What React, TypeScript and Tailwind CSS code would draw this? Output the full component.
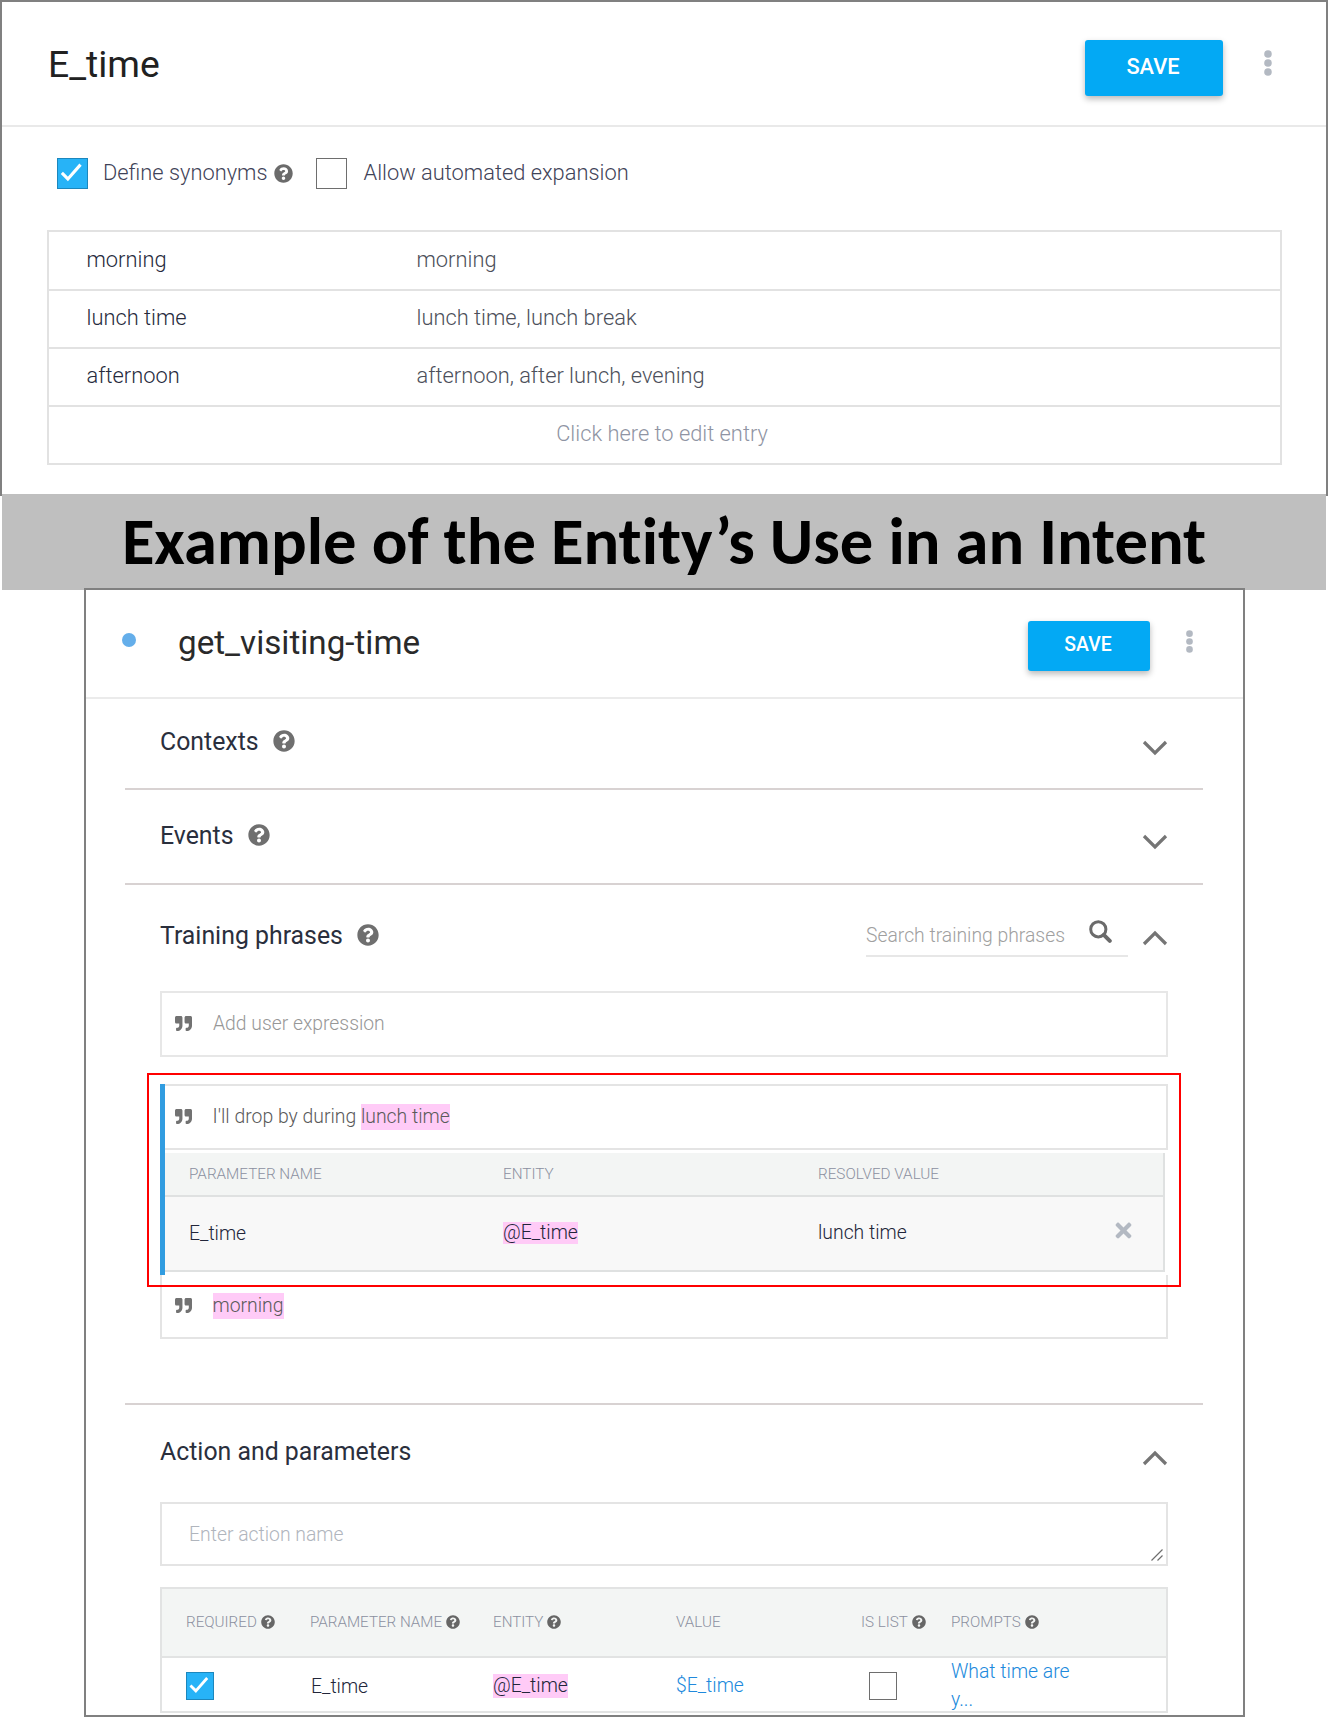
import type { ReactNode } from "react";
import { FaQuestionCircle, FaQuoteRight, FaTimes } from "react-icons/fa";

function Check({ on, className }: { on?: boolean; className: string }) {
  return (
    <span
      className={`flex shrink-0 items-center justify-center border-[1px] ${
        on ? "border-[#1c87bd] bg-[#27b3f7]" : "border-[#6e6e6e] bg-white"
      } ${className}`}
    >
      {on && (
        <svg viewBox="0 0 30 30" className="h-full w-full" fill="none" stroke="#fff" strokeWidth="3.2">
          <path d="M4 14.4 L10.2 20.6 L23.3 5.8" />
        </svg>
      )}
    </span>
  );
}

function Dots({ className }: { className: string }) {
  return (
    <svg viewBox="0 0 8 26" className={className} fill="#b3b9c2">
      <circle cx="4" cy="4" r="3.8" />
      <circle cx="4" cy="13" r="3.8" />
      <circle cx="4" cy="22" r="3.8" />
    </svg>
  );
}

function Chevron({ up, className = "" }: { up?: boolean; className?: string }) {
  return (
    <svg viewBox="0 0 26 16" className={`h-4 w-[26px] shrink-0 ${className}`} fill="none" stroke="#757575" strokeWidth="3.2">
      <path d={up ? "M2 14 L13 3 L24 14" : "M2 2 L13 13 L24 2"} />
    </svg>
  );
}

function Mark({ children, className = "h-[26px]" }: { children: ReactNode; className?: string }) {
  return <span className={`inline-flex items-center bg-[#ffcbf7] ${className}`}>{children}</span>;
}

function Quote() {
  return <FaQuoteRight className="mb-[2px] h-[17px] w-[19px] shrink-0 text-[#727272]" />;
}

function Th({ children, help }: { children: ReactNode; help?: boolean }) {
  return (
    <div className="flex items-center gap-1 whitespace-nowrap">
      {children}
      {help && <FaQuestionCircle className="h-3.5 w-3.5 text-[#666]" />}
    </div>
  );
}

const entries = [
  { name: "morning", synonyms: "morning", row: "h-[59px] pb-0" },
  { name: "lunch time", synonyms: "lunch time, lunch break", row: "h-[58px] pb-[2px]" },
  { name: "afternoon", synonyms: "afternoon, after lunch, evening", row: "h-[58px] pb-[2px]" },
];

function EntityPanel() {
  return (
    <section className="h-[496px] border-x-2 border-t-2 border-[#808080] bg-white">
      <header className="flex h-[125px] items-center border-b-2 border-[#e9e9e9] pl-[46px] pr-[54px]">
        <h1 className="mt-[2px] flex-1 text-[37.3px] leading-none text-[#212121]">E_time</h1>
        <button className="mr-[41px] mt-[8px] flex h-14 w-[138px] items-center justify-center rounded-[3px] bg-[#03a9f4] pb-[1px] pr-[2px] text-[21.8px] font-medium text-white shadow-[0_3px_6px_rgba(0,0,0,0.28)]">
          SAVE
        </button>
        <Dots className="mb-[1px] h-[26px] w-2" />
      </header>
      <div className="flex h-[92px] items-center pl-[55px] text-[21.85px] font-light text-[#3f4358]">
        <Check on className="mt-[1px] h-[31px] w-[31px]" />
        <span className="ml-[15px]">Define synonyms</span>
        <FaQuestionCircle className="ml-[6px] h-[19px] w-[19px] text-[#6b6b6b]" />
        <Check className="ml-[23px] mt-[1px] h-[31px] w-[31px]" />
        <span className="ml-[17px]">Allow automated expansion</span>
      </div>
      <div className="ml-[45px] mt-[11px] w-[1235px] border-2 border-b-0 border-[#e2e2e2] text-[21.85px] font-light">
        {entries.map((e) => (
          <div key={e.name} className={`grid grid-cols-[330px_1fr] items-center border-b-2 border-[#e2e2e2] pl-[37.5px] ${e.row}`}>
            <span className="text-[#262a3c]">{e.name}</span>
            <span className="text-[#4c4f5a]">{e.synonyms}</span>
          </div>
        ))}
        <div className="flex h-[58px] items-center justify-center border-b-2 border-[#e2e2e2] pb-[2px] pr-[5px] text-[#8f94a3]">
          Click here to edit entry
        </div>
      </div>
    </section>
  );
}

function PhraseTable() {
  return (
    <div className="mr-[3px] mt-[3px] border-r-2 border-[#dfe1e1] font-light">
      <div className="grid h-11 grid-cols-[314px_315px_1fr] items-center border-b-2 border-[#dfe1e1] bg-[#f3f5f4] pl-6 text-[15.25px] text-[#8b90a0]">
        <span>PARAMETER NAME</span>
        <span>ENTITY</span>
        <span>RESOLVED VALUE</span>
      </div>
      <div className="grid h-[75px] grid-cols-[314px_315px_1fr_auto] items-center border-b-2 border-[#dfe1e1] bg-[#f8f8f8] pl-6 pr-[28px] text-[19.36px] text-[#22263a]">
        <span className="mt-[1px]">E_time</span>
        <span className="mb-[1px] flex">
          <Mark className="h-[22px]">@E_time</Mark>
        </span>
        <span className="mb-[2px]">lunch time</span>
        <FaTimes className="mb-[7px] h-[23px] w-[23px] text-[#b3b9c2]" />
      </div>
    </div>
  );
}

function SectionHead({ title, help, className }: { title: string; help?: boolean; className: string }) {
  return (
    <div className={`flex items-center gap-[14px] text-[24.85px] text-[#2a2f3d] ${className}`}>
      <h3>{title}</h3>
      {help && <FaQuestionCircle className="h-[22px] w-[22px] text-[#6f6f6f]" />}
    </div>
  );
}

function IntentPanel() {
  return (
    <section className="relative -mt-[2px] ml-[84px] h-[1129px] w-[1161px] overflow-hidden border-2 border-[#808080] bg-white">
      <header className="flex h-[109px] items-center border-b-2 border-[#ebebeb] pl-9 pr-[50px]">
        <span className="mb-[8px] h-3.5 w-3.5 rounded-full bg-[#64aeea]" />
        <h2 className="mb-[2px] ml-[42px] flex-1 text-[33.2px] leading-none text-[#2a2a2a]">get_visiting-time</h2>
        <button className="mb-[-4px] mr-[36px] flex h-[50px] w-[122px] items-center justify-center rounded-[3px] bg-[#03a9f4] pb-[1px] pr-[2px] text-[19.4px] font-medium text-white shadow-[0_3px_6px_rgba(0,0,0,0.28)]">
          SAVE
        </button>
        <Dots className="mb-[5px] h-[23px] w-[7px]" />
      </header>

      <div className="ml-[39px] mr-[40px]">
        <div className="flex h-[91px] items-center justify-between border-b-2 border-[#d8d2d2] pl-[35px] pr-[35px]">
          <SectionHead title="Contexts" help className="mb-[4px]" />
          <Chevron className="mt-[9px]" />
        </div>
        <div className="flex h-[95px] items-center justify-between border-b-2 border-[#d8d2d2] pl-[35px] pr-[35px]">
          <SectionHead title="Events" help className="mb-[2px]" />
          <Chevron className="mt-[11px]" />
        </div>

        <div className="h-[520px] border-b-2 border-[#d8d2d2] px-[35px]">
          <div className="flex h-[101px] items-center">
            <SectionHead title="Training phrases" help className="flex-1" />
            <div className="mt-[1px] flex h-[42px] w-[262px] items-center justify-between border-b-2 border-[#e7e7e7] pr-[16px]">
              <span className="mt-[2px] text-[19.33px] font-light text-[#a0a0a0]">Search training phrases</span>
              <svg viewBox="0 0 23 23" className="mb-[7px] h-[23px] w-[23px]" fill="none" stroke="#6b6b6b">
                <circle cx="9.3" cy="9.3" r="7.6" strokeWidth="3" />
                <path d="M14.8 14.8 L20.8 20.8" strokeWidth="4" strokeLinecap="round" />
              </svg>
            </div>
            <Chevron up className="ml-[14px] mt-[4px]" />
          </div>

          <div className="mt-[5px] flex h-[66px] items-center gap-[20px] border-2 border-[#e7e7e7] pl-[12px] text-[19.33px] font-light text-[#979797]">
            <Quote />
            Add user expression
          </div>

          <div className="relative mt-[27px]">
            <div className="h-[191px] border-l-[5px] border-[#319ce0]">
              <div className="flex h-[66px] items-center border-2 border-l-0 border-[#e4e4e4] pl-[9px] text-[19.4px] font-light text-[#5a5a5a]">
                <Quote />
                <span className="ml-[19.5px] flex items-center whitespace-pre">
                  I'll drop by during <Mark>lunch time</Mark>
                </span>
              </div>
              <PhraseTable />
            </div>
            <div className="flex h-[64px] items-center gap-[19.5px] border-2 border-t-0 border-[#e4e4e4] pl-[12px] text-[19.4px] font-light text-[#5a5a5a]">
              <Quote />
              <Mark>morning</Mark>
            </div>
            <div className="pointer-events-none absolute -left-[13px] -right-[13px] -top-[11px] h-[214px] border-2 border-[#ff0000]" />
          </div>
        </div>

        <div className="px-[35px]">
          <div className="flex h-[92px] items-center justify-between">
            <SectionHead title="Action and parameters" className="mt-[1px]" />
            <Chevron up className="mt-[14px]" />
          </div>
          <div className="mt-[5px] flex h-16 items-center justify-between border-2 border-[#e4e4e4] pl-[27px] text-[19.36px] font-light text-[#b0b5bd]">
            <span className="mt-[2px]">Enter action name</span>
            <svg viewBox="0 0 12 12" className="mb-[3px] mr-[3px] h-3 w-3 self-end" stroke="#6e6e6e" strokeWidth="1.2">
              <path d="M0.5 11.5 L11.5 0.5 M6.5 11.5 L11.5 6.5" />
            </svg>
          </div>
          <div className="mt-[21px] border-2 border-[#e2e3e3] font-light">
            <div className="grid h-[69px] grid-cols-[124px_183px_183px_185px_90px_1fr] items-center border-b-2 border-[#e2e3e3] bg-[#f3f5f4] pl-[24px] text-[15.2px] text-[#8b90a0]">
              <Th help>REQUIRED</Th>
              <Th help>PARAMETER NAME</Th>
              <Th help>ENTITY</Th>
              <Th>VALUE</Th>
              <Th help>IS LIST</Th>
              <Th help>PROMPTS</Th>
            </div>
            <div className="grid h-[53px] grid-cols-[124px_183px_183px_185px_90px_1fr] items-center pl-[24px] text-[19.36px] text-[#22263a]">
              <Check on className="h-7 w-7" />
              <span className="mt-[2px] pl-[1px]">E_time</span>
              <span className="flex">
                <Mark className="h-6">@E_time</Mark>
              </span>
              <span className="text-[#2089dc]">$E_time</span>
              <Check className="ml-[8px] h-7 w-7" />
              <span className="w-[124px] leading-[28px] text-[#2089dc]">What time are y...</span>
            </div>
          </div>
        </div>
      </div>
    </section>
  );
}

export default function App() {
  return (
    <main className="h-[1717px] w-[1328px] overflow-hidden bg-white font-['Roboto',sans-serif]">
      <EntityPanel />
      <div className="relative mx-[2px] -mt-[2px] flex h-24 items-center justify-center bg-[#bfbfbf]">
        <h2 className="whitespace-nowrap font-['Carlito','Lato',sans-serif] text-[66.6px] font-bold leading-none text-black [font-variant-ligatures:none]">
          Example of the Entity’s Use in an Intent
        </h2>
      </div>
      <IntentPanel />
    </main>
  );
}
